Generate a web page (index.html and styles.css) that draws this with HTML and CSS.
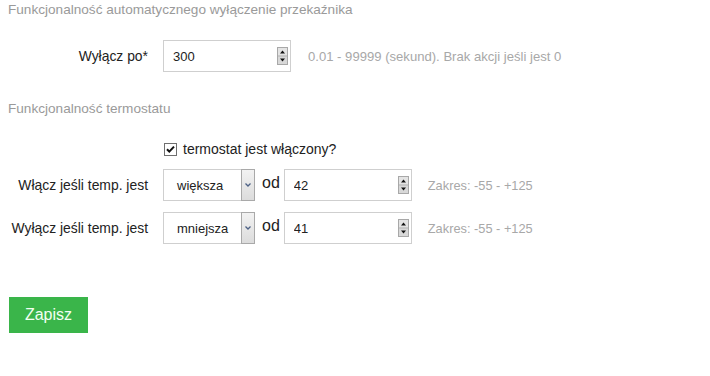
FILE: index.html
```html
<!DOCTYPE html>
<html lang="pl">
  <head>
    <meta charset="UTF-8" />
    <title>Ustawienia przekaźnika</title>
    <link rel="stylesheet" href="styles.css">
  </head>
  <body>
    <h2 class="section-title">Funkcjonalność automatycznego wyłączenie przekaźnika</h2>

    <div class="row row-off">
      <label class="row-label" for="off-after">Wyłącz po*</label>
      <div class="field">
        <input class="field-input" id="off-after" type="text" value="300" />
        <span class="spinner">
          <svg width="11" height="18" viewBox="0 0 11 18">
            <rect x="0.5" y="0.5" width="10" height="17" fill="#f0f0f0" stroke="#a8a8a8" />
            <rect x="1" y="1" width="9" height="7.5" fill="#e4e4e4" />
            <rect x="1" y="9.5" width="9" height="7.5" fill="#d8d8d8" />
            <line x1="1" y1="9" x2="10" y2="9" stroke="#a8a8a8" />
            <path d="M3 6.5 L5.5 3.5 L8 6.5 Z" fill="#111" />
            <path d="M3 11.5 L8 11.5 L5.5 14.5 Z" fill="#111" />
          </svg>
        </span>
      </div>
      <span class="hint hint-off">0.01 - 99999 (sekund). Brak akcji jeśli jest 0</span>
    </div>

    <h2 class="section-title title-thermo">Funkcjonalność termostatu</h2>

    <div class="check-row">
      <span class="checkbox">
        <svg width="13" height="13" viewBox="0 0 13 13">
          <rect x="0.5" y="0.5" width="12" height="12" fill="#fff" stroke="#6f6f6f" />
          <path d="M3 6.2 L5.3 8.6 L10 3.6" fill="none" stroke="#111" stroke-width="2" />
        </svg>
      </span>
      <span class="check-text">termostat jest włączony?</span>
    </div>

    <div class="row row-on">
      <label class="row-label">Włącz jeśli temp. jest</label>
      <div class="select">
        <span class="select-value">większa</span>
        <span class="select-arrow">
          <svg width="8" height="6" viewBox="0 0 8 6">
            <path d="M1.5 1.5 L4 4 L6.5 1.5" fill="none" stroke="#4d6185" stroke-width="1.3" />
          </svg>
        </span>
      </div>
      <span class="od">od</span>
      <div class="field">
        <input class="field-input" type="text" value="42" />
        <span class="spinner">
          <svg width="11" height="18" viewBox="0 0 11 18">
            <rect x="0.5" y="0.5" width="10" height="17" fill="#f0f0f0" stroke="#a8a8a8" />
            <rect x="1" y="1" width="9" height="7.5" fill="#e4e4e4" />
            <rect x="1" y="9.5" width="9" height="7.5" fill="#d8d8d8" />
            <line x1="1" y1="9" x2="10" y2="9" stroke="#a8a8a8" />
            <path d="M3 6.5 L5.5 3.5 L8 6.5 Z" fill="#111" />
            <path d="M3 11.5 L8 11.5 L5.5 14.5 Z" fill="#111" />
          </svg>
        </span>
      </div>
      <span class="hint">Zakres: -55 - +125</span>
    </div>

    <div class="row row-below">
      <label class="row-label">Wyłącz jeśli temp. jest</label>
      <div class="select">
        <span class="select-value">mniejsza</span>
        <span class="select-arrow">
          <svg width="8" height="6" viewBox="0 0 8 6">
            <path d="M1.5 1.5 L4 4 L6.5 1.5" fill="none" stroke="#4d6185" stroke-width="1.3" />
          </svg>
        </span>
      </div>
      <span class="od">od</span>
      <div class="field">
        <input class="field-input" type="text" value="41" />
        <span class="spinner">
          <svg width="11" height="18" viewBox="0 0 11 18">
            <rect x="0.5" y="0.5" width="10" height="17" fill="#f0f0f0" stroke="#a8a8a8" />
            <rect x="1" y="1" width="9" height="7.5" fill="#e4e4e4" />
            <rect x="1" y="9.5" width="9" height="7.5" fill="#d8d8d8" />
            <line x1="1" y1="9" x2="10" y2="9" stroke="#a8a8a8" />
            <path d="M3 6.5 L5.5 3.5 L8 6.5 Z" fill="#111" />
            <path d="M3 11.5 L8 11.5 L5.5 14.5 Z" fill="#111" />
          </svg>
        </span>
      </div>
      <span class="hint">Zakres: -55 - +125</span>
    </div>

    <button class="save-btn" type="button">Zapisz</button>
  </body>
</html>
```

FILE: styles.css
```css
body {
  font-family: "Liberation Sans", Arial, sans-serif;
  color: #333;
  margin: 0;
  padding: 0 8px;
  background: #fff;
}
.section-title {
  font-size: 13.6px;
  font-weight: normal;
  line-height: 20px;
  color: #9a9a9a;
  margin: 0;
}
.title-thermo {
  margin-top: 27px;
}
.row {
  display: flex;
  align-items: center;
  height: 32px;
}
.row-off {
  margin-top: 20px;
}
.row-on {
  margin-top: 10px;
}
.row-below {
  margin-top: 11px;
}
.row-label {
  width: 140px;
  margin-right: 15px;
  text-align: right;
  font-size: 13.9px;
  color: #222;
}
.field {
  display: flex;
  align-items: center;
  box-sizing: border-box;
  width: 128px;
  height: 32px;
  border: 1px solid #cfcfcf;
  padding: 0 1px 0 9px;
  background: #fff;
}
.field-input {
  flex: 1;
  min-width: 0;
  border: none;
  outline: none;
  padding: 0;
  font-family: inherit;
  font-size: 13px;
  color: #222;
  background: transparent;
}
.spinner {
  display: flex;
  margin-right: 1px;
}
.hint {
  font-size: 12.8px;
  color: #a8a8a8;
  margin-left: 16px;
}
.hint-off {
  font-size: 13.1px;
  margin-left: 17px;
}
.check-row {
  display: flex;
  align-items: center;
  height: 20px;
  margin-top: 20px;
  padding-left: 156px;
}
.checkbox {
  display: flex;
  margin-right: 6px;
}
.check-text {
  font-size: 14px;
  color: #222;
}
.select {
  display: flex;
  height: 32px;
  width: 92px;
}
.select-value {
  flex: 1;
  display: flex;
  align-items: center;
  padding-left: 13px;
  border: 1px solid #cfcfcf;
  border-right: none;
  font-size: 13px;
  color: #222;
}
.select-arrow {
  display: flex;
  align-items: center;
  justify-content: center;
  width: 12px;
  border: 1px solid #a9a9a9;
  background: linear-gradient(#f2f2f2, #dcdcdc);
}
.od {
  font-size: 16px;
  color: #222;
  margin: 0 4px 0 7px;
  padding-bottom: 4px;
}
.save-btn {
  display: block;
  margin-top: 53px;
  margin-left: 1px;
  width: 79px;
  height: 36px;
  border: none;
  background: #3ab54a;
  color: #f2fff2;
  font-family: inherit;
  font-size: 16px;
  padding: 0;
}
```
